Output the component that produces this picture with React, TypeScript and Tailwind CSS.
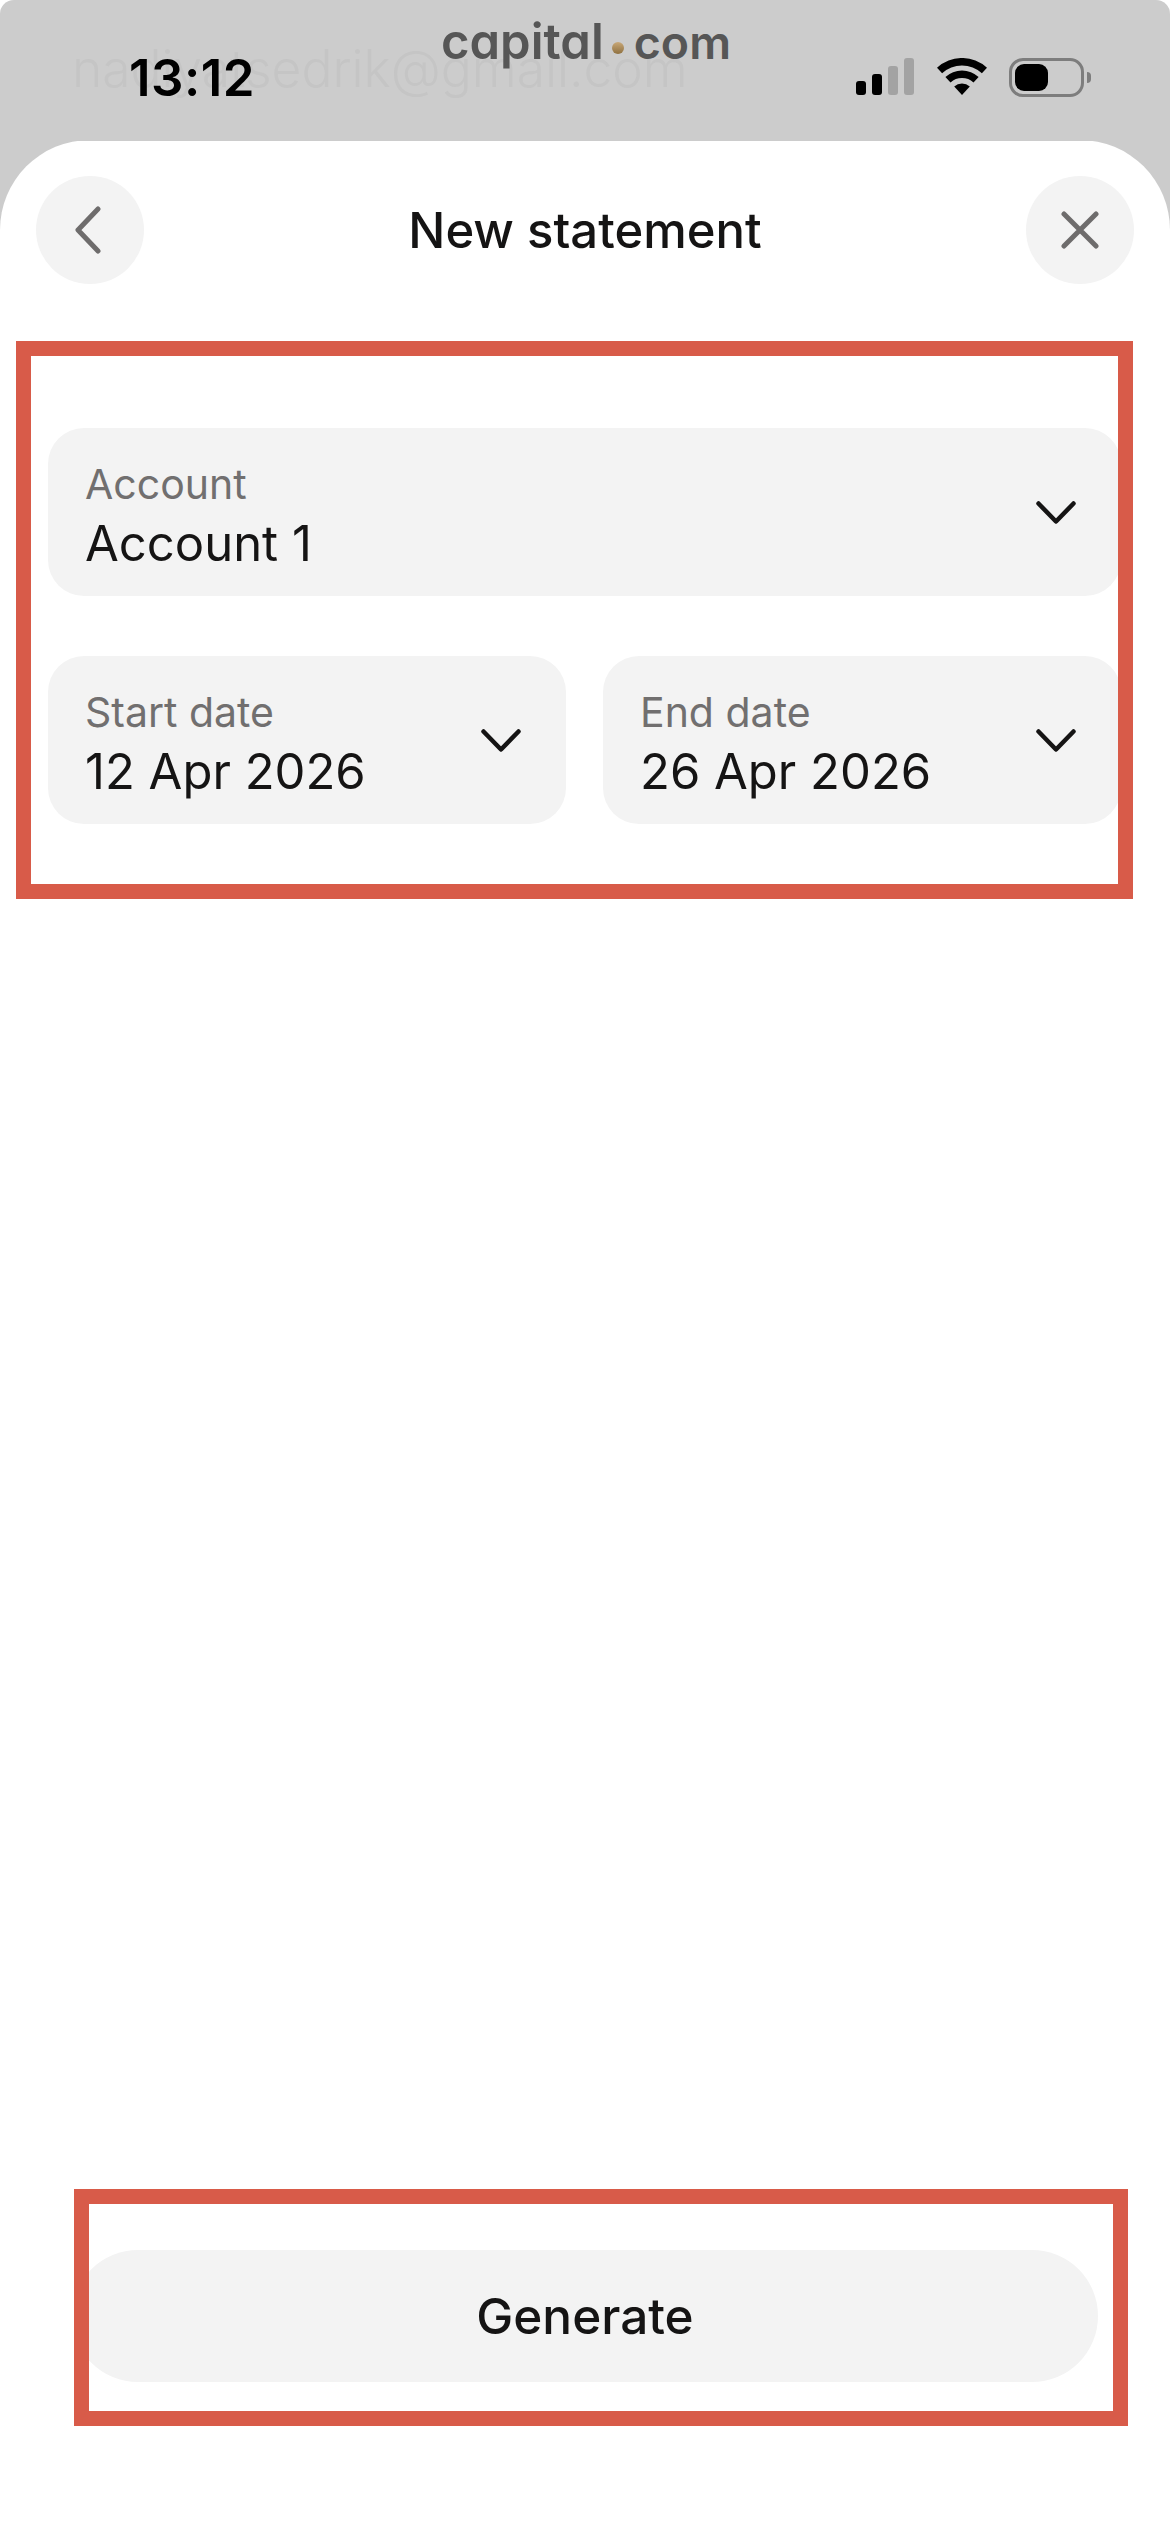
function Chevron() {
  return (
    <svg width="40" height="23" viewBox="0 0 40 23" fill="none" className="shrink-0">
      <path d="M2.5 2.5 L20 20.5 L37.5 2.5" stroke="#151414" strokeWidth="4.5" strokeLinecap="round" strokeLinejoin="round" />
    </svg>
  );
}

function StatusIcons() {
  return (
    <div className="ml-auto mr-[79px] mt-[4px] flex items-start">
      {/* Signal */}
      <div className="flex h-[37px] items-end gap-[6px]">
        <div className="h-[14px] w-[10px] rounded-[3px] bg-black" />
        <div className="h-[21px] w-[10px] rounded-[3px] bg-black" />
        <div className="h-[29px] w-[10px] rounded-[3px] bg-[#a3a3a3]" />
        <div className="h-[37px] w-[10px] rounded-[3px] bg-[#a3a3a3]" />
      </div>
      {/* Wifi */}
      <svg width="50" height="37" viewBox="0 0 50 37" fill="#000" className="ml-[23px]">
        <path d="M0 9.7 A37 37 0 0 1 50 9.7 L44.9 15.3 A29.5 29.5 0 0 0 5.1 15.3 Z" />
        <path d="M8.4 18.95 A24.5 24.5 0 0 1 41.6 18.95 L36.5 24.5 A17 17 0 0 0 13.5 24.5 Z" />
        <path d="M17.2 28.5 A11.5 11.5 0 0 1 32.8 28.5 L25 37 Z" />
      </svg>
      {/* Battery */}
      <div className="ml-[22px] flex h-[39px] w-[75px] items-center rounded-[14px] border-[3px] border-[#7d7d7d] pl-[3px]">
        <div className="h-[27px] w-[33px] rounded-[9px] bg-black" />
      </div>
      <div className="ml-[3px] mt-[14px] h-[11px] w-[4px] rounded-r-full bg-[#7d7d7d]" />
    </div>
  );
}

function SelectField({ label, value }: { label: string; value: string }) {
  return (
    <div className="flex h-[168px] items-center justify-between rounded-[36px] bg-[#f3f3f3] pl-[37px] pr-[45px]">
      <div className="mt-[7px] flex flex-col">
        <span className="text-[41px] leading-[48px] text-[#716f6f]">{label}</span>
        <span className="mt-[8px] text-[49px] leading-[56px] text-[#151414]">{value}</span>
      </div>
      <Chevron />
    </div>
  );
}

export default function App() {
  return (
    <div className="relative flex h-[2532px] w-[1170px] flex-col overflow-hidden bg-white font-['Inter',sans-serif]">
      {/* Status bar */}
      <div className="relative flex h-[141px] shrink-0 items-start rounded-t-[14px] bg-[#cccccc] pt-[54px]">
        <span className="absolute left-[72px] top-[38px] text-[51.5px] font-light leading-[60px] text-[#c5c5c5]">
          nadiyatsedrik@gmail.com
        </span>
        <div className="absolute left-[441px] top-[13px] flex items-center text-[46.5px] font-semibold leading-[58px] text-[#565656] [font-feature-settings:'cv11']">
          <span className="text-[49px]">capital</span>
          <span className="ml-[8px] mr-[10px] mt-[12px] h-[12px] w-[12px] rounded-full bg-gradient-to-b from-[#c9a878] to-[#8f7140]" />
          <span>com</span>
        </div>
        <span className="relative ml-[129px] text-[51px] font-semibold leading-[48px] tracking-[0.5px] text-black">13:12</span>
        <StatusIcons />
      </div>

      {/* Sheet */}
      <div className="-mt-px flex flex-1 flex-col bg-[#cccccc]">
        <div className="flex flex-1 flex-col rounded-t-[90px] bg-white pt-[36px]">
          <div className="flex items-center justify-between px-[36px]">
            <div className="flex h-[108px] w-[108px] items-center justify-center rounded-full bg-[#f3f3f3]">
              <svg width="26" height="48" viewBox="0 0 26 48" fill="none" className="-ml-[5px]">
                <path d="M23 3 L3 24 L23 45" stroke="#6e6c6c" strokeWidth="5" strokeLinecap="round" strokeLinejoin="round" />
              </svg>
            </div>
            <span className="pt-[2px] text-[49px] font-medium leading-[58px] text-[#151414]">New statement</span>
            <div className="flex h-[108px] w-[108px] items-center justify-center rounded-full bg-[#f3f3f3]">
              <svg width="38" height="38" viewBox="0 0 38 38" fill="none">
                <path d="M3 3 L35 35 M35 3 L3 35" stroke="#6e6c6c" strokeWidth="5" strokeLinecap="round" />
              </svg>
            </div>
          </div>

          {/* Form, marked with a red box */}
          <div className="ml-[16px] mt-[57px] h-[558px] w-[1117px] overflow-hidden border-[15px] border-[#d85b49] pl-[17px] pt-[72px]">
            <div className="-mr-[3px] flex flex-col gap-[60px]">
              <SelectField label="Account" value="Account 1" />
              <div className="grid grid-cols-2 gap-[37px]">
                <SelectField label="Start date" value="12 Apr 2026" />
                <SelectField label="End date" value="26 Apr 2026" />
              </div>
            </div>
          </div>

          {/* Action, marked with a red box */}
          <div className="mb-[106px] ml-[74px] mt-auto h-[237px] w-[1054px] overflow-hidden border-[15px] border-[#d85b49] pt-[46px]">
            <div className="-ml-[17px] flex h-[132px] w-[1026px] items-center justify-center rounded-full bg-[#f3f3f3]">
              <span className="text-[49.5px] font-medium leading-[58px] text-[#151414]">Generate</span>
            </div>
          </div>
        </div>
      </div>
    </div>
  );
}
